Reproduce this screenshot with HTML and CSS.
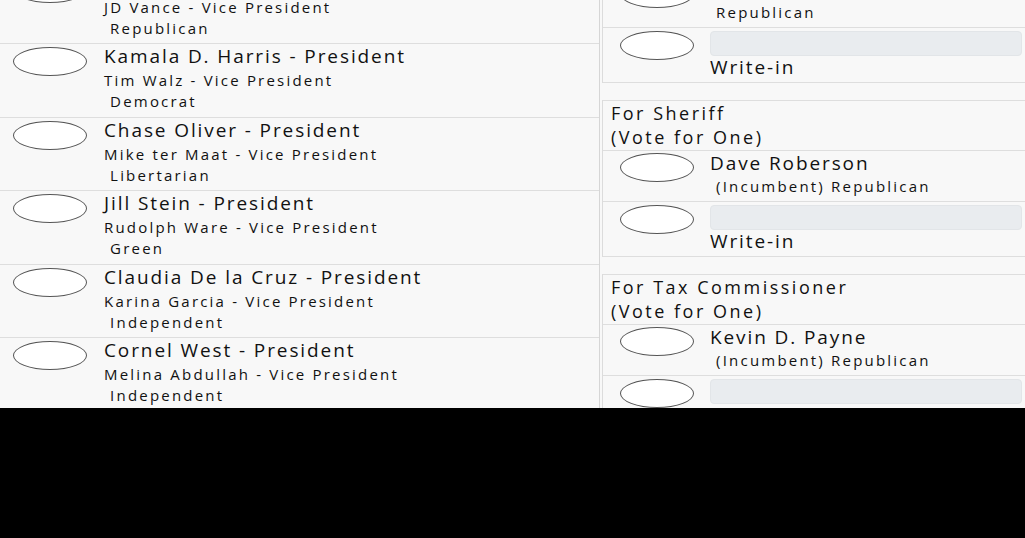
FILE: index.html
```html
<!DOCTYPE html>
<html lang="en">
<head>
<meta charset="utf-8">
<title>Sample Ballot</title>
<link rel="stylesheet" href="styles.css">
</head>
<body>
<main class="viewport">
  <div class="ballot">
    <div class="col col-left">
      <div class="cand-lg">
        <span class="oval"></span>
        <div class="info">
          <div class="name">Donald J. Trump - President</div>
          <div class="sub">JD Vance - Vice President</div>
          <div class="party">&nbsp;Republican</div>
        </div>
      </div>
      <div class="cand-lg">
        <span class="oval"></span>
        <div class="info">
          <div class="name">Kamala D. Harris - President</div>
          <div class="sub">Tim Walz - Vice President</div>
          <div class="party">&nbsp;Democrat</div>
        </div>
      </div>
      <div class="cand-lg">
        <span class="oval"></span>
        <div class="info">
          <div class="name">Chase Oliver - President</div>
          <div class="sub">Mike ter Maat - Vice President</div>
          <div class="party">&nbsp;Libertarian</div>
        </div>
      </div>
      <div class="cand-lg">
        <span class="oval"></span>
        <div class="info">
          <div class="name">Jill Stein - President</div>
          <div class="sub">Rudolph Ware - Vice President</div>
          <div class="party">&nbsp;Green</div>
        </div>
      </div>
      <div class="cand-lg">
        <span class="oval"></span>
        <div class="info">
          <div class="name">Claudia De la Cruz - President</div>
          <div class="sub">Karina Garcia - Vice President</div>
          <div class="party">&nbsp;Independent</div>
        </div>
      </div>
      <div class="cand-lg">
        <span class="oval"></span>
        <div class="info">
          <div class="name">Cornel West - President</div>
          <div class="sub">Melina Abdullah - Vice President</div>
          <div class="party">&nbsp;Independent</div>
        </div>
      </div>
    </div>

    <div class="col col-right">
      <section class="race">
        <header class="race-head">
          <div>For Clerk of Superior Court</div>
          <div>(Vote for One)</div>
        </header>
        <div class="cand">
          <span class="oval"></span>
          <div class="info">
            <div class="name">Candidate</div>
            <div class="party">&nbsp;Republican</div>
          </div>
        </div>
        <div class="cand writein">
          <span class="oval"></span>
          <div class="info">
            <div class="write-box"></div>
            <div class="name write-label">Write-in</div>
          </div>
        </div>
      </section>

      <section class="race">
        <header class="race-head">
          <div>For Sheriff</div>
          <div>(Vote for One)</div>
        </header>
        <div class="cand">
          <span class="oval"></span>
          <div class="info">
            <div class="name">Dave Roberson</div>
            <div class="party">&nbsp;(Incumbent) Republican</div>
          </div>
        </div>
        <div class="cand writein">
          <span class="oval"></span>
          <div class="info">
            <div class="write-box"></div>
            <div class="name write-label">Write-in</div>
          </div>
        </div>
      </section>

      <section class="race">
        <header class="race-head">
          <div>For Tax Commissioner</div>
          <div>(Vote for One)</div>
        </header>
        <div class="cand">
          <span class="oval"></span>
          <div class="info">
            <div class="name">Kevin D. Payne</div>
            <div class="party">&nbsp;(Incumbent) Republican</div>
          </div>
        </div>
        <div class="cand writein">
          <span class="oval"></span>
          <div class="info">
            <div class="write-box"></div>
            <div class="name write-label">Write-in</div>
          </div>
        </div>
      </section>
    </div>
  </div>
</main>
</body>
</html>
```

FILE: styles.css
```css
* { box-sizing: border-box; }

html, body {
  margin: 0;
  padding: 0;
  background: #000;
}

body {
  font-family: "Open Sans", "Noto Sans", "Liberation Sans", sans-serif;
  font-weight: 400;
  color: #111;
}

.viewport {
  height: 408px;
  overflow: hidden;
  background: #f8f8f8;
}

.ballot {
  display: flex;
  align-items: flex-start;
}

.col-left {
  width: 600px;
  flex: none;
  margin-top: -30.5px;
  border-right: 1px solid #d6d6d6;
}

.col-right {
  flex: 1;
  margin-left: 2px;
  margin-top: -74px;
}

/* left column presidential rows */
.cand-lg {
  display: flex;
  align-items: flex-start;
  border-top: 1px solid #dedede;
  padding: 0 0 5.5px 13px;
}

.cand-lg .oval {
  margin-top: 3px;
  margin-right: 17px;
}

.oval {
  flex: none;
  width: 74px;
  height: 29px;
  border: 1px solid #555;
  border-radius: 50%;
  background: #fff;
}

.name {
  font-size: 19px;
  line-height: 24px;
  letter-spacing: 1.9px;
  white-space: nowrap;
}

.cand-lg .sub {
  font-size: 15px;
  line-height: 24px;
  letter-spacing: 2.2px;
  white-space: nowrap;
}

.cand-lg .party {
  font-size: 15px;
  line-height: 19px;
  letter-spacing: 2.2px;
  white-space: nowrap;
}

/* right column races */
.race {
  border-left: 1px solid #dcdcdc;
  margin-bottom: 17px;
}

.race-head {
  border-top: 1px solid #dedede;
  padding: 0 0 1px 8px;
  font-size: 18px;
  line-height: 24px;
  letter-spacing: 2.5px;
  white-space: nowrap;
}

.cand {
  display: flex;
  align-items: flex-start;
  border-top: 1px solid #dedede;
  padding: 0 3px 4px 17px;
}

.race .cand:last-child {
  border-bottom: 1px solid #dedede;
}

.cand .oval {
  margin-top: 2px;
  margin-right: 16px;
}

.cand .info {
  flex: 1;
  min-width: 0;
}

.cand .party {
  font-size: 15px;
  line-height: 22px;
  letter-spacing: 2.2px;
  white-space: nowrap;
}

.writein {
  padding-bottom: 4px;
}

.writein .oval {
  margin-top: 3px;
}

.write-label {
  line-height: 22px;
}

.write-box {
  margin-top: 3px;
  height: 25px;
  background: #e9ecef;
  border: 1px solid #e2e5e8;
  border-radius: 4px;
}
```
